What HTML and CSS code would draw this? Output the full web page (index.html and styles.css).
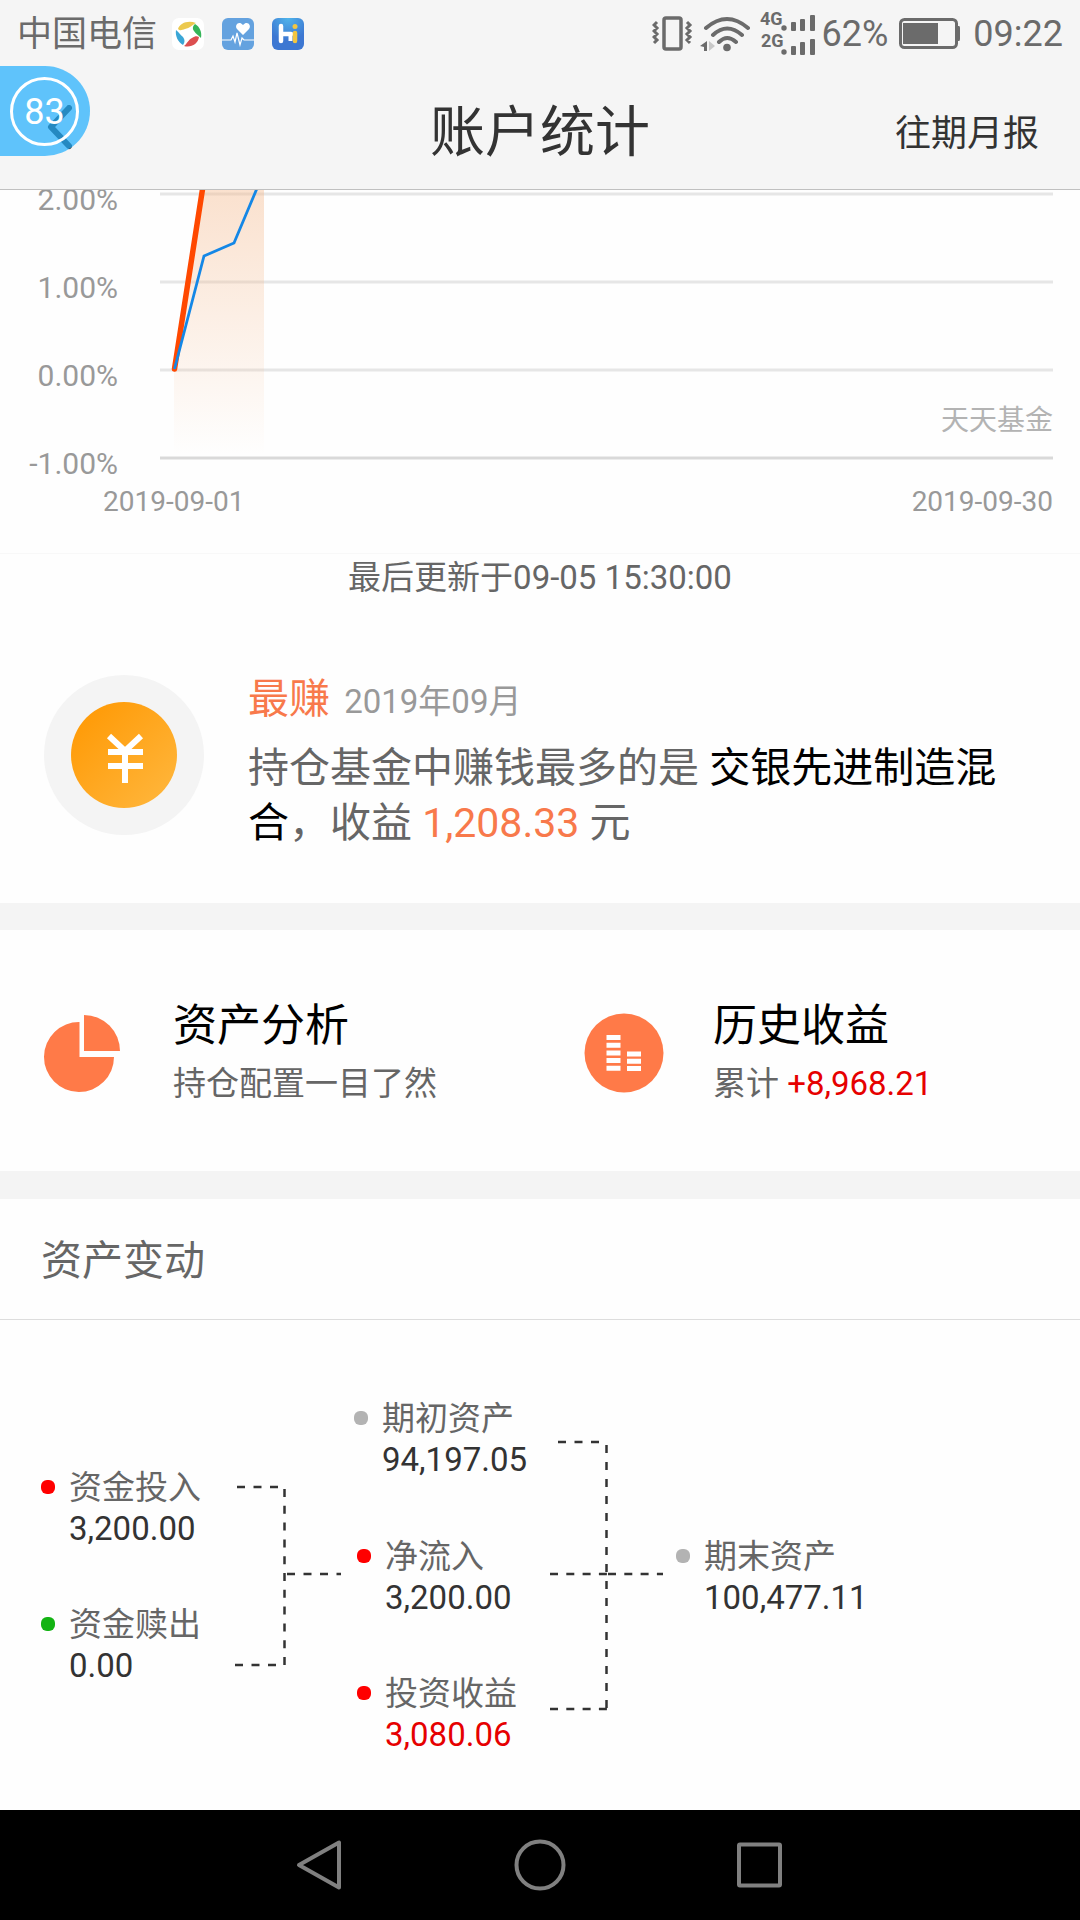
FILE: index.html
```html
<!DOCTYPE html>
<html lang="zh-CN">
<head>
  <meta charset="UTF-8" />
  <meta name="viewport" content="width=device-width, initial-scale=1" />
  <title>账户统计</title>
  <link rel="stylesheet" href="styles.css">
</head>
<body>

<!-- Status bar -->
<div class="statusbar">
  <span class="carrier">中国电信</span>
  <div class="apps">
    <svg width="32" height="32" viewBox="0 0 32 32">
      <rect width="32" height="32" rx="7" fill="#fff" />
      <path d="M6 11C8 5 16 2 24 5C20 7 18 10 13 11C10 12 8 13 6 11Z" fill="#ecc94e" />
      <path d="M23 6C28 9 30 14 29 20C26 17 24 16 22 13C20 10 21 8 23 6Z" fill="#35b558" />
      <path d="M27 19C26 26 19 30 12 28C15 26 16 22 20 20C23 18 25 18 27 19Z" fill="#dc4f50" />
      <path d="M11 27C6 24 3 18 4 12C7 14 8 17 11 19C13 22 13 24 11 27Z" fill="#3aa6d6" />
    </svg>
    <svg width="32" height="32" viewBox="0 0 32 32">
      <rect width="32" height="32" rx="6" fill="#64a2df" />
      <path d="M21 17L15 11C12 7 17 2 21 7C25 2 30 7 27 11Z" fill="#fff" />
      <path d="M0 22H9L11 18L13 24L15 15L18 27L20 20L22 22H32" fill="none" stroke="#fff" stroke-width="1.2" />
    </svg>
    <svg width="32" height="32" viewBox="0 0 32 32">
      <defs>
        <radialGradient id="hiBg" cx="0.5" cy="0" r="0.7">
          <stop offset="0" stop-color="#4fb4ea" />
          <stop offset="1" stop-color="#3d77d2" />
        </radialGradient>
      </defs>
      <rect width="32" height="32" rx="6" fill="url(#hiBg)" />
      <path d="M9 8V23M9 16H19" stroke="#fff" stroke-width="4.5" stroke-linecap="round" />
      <path d="M18.500 15V23" stroke="#fff" stroke-width="4" />
      <path d="M23 15V23" stroke="#f2c640" stroke-width="4.500" stroke-linecap="round" />
      <circle cx="23" cy="8.500" r="2.500" fill="#f2c640" />
    </svg>
  </div>
  <div class="system">
    <svg width="166" height="50" viewBox="0 0 166 50">
      <g fill="none" stroke="#6b6b6b">
        <rect x="12" y="9" width="17" height="31" rx="2" stroke-width="3.500" />
        <path d="M5 13L2 16L5 19L2 22L5 25L2 28L5 31L2 34M35 13L38 16L35 19L38 22L35 25L38 28L35 31L38 34" stroke-width="3" />
        <path d="M54 19Q75 1 96 19M61 26Q75 13 90 26M67 33Q75 25 84 33" stroke-width="4" stroke-linecap="round" />
      </g>
      <g fill="#6b6b6b">
        <circle cx="75" cy="38.500" r="3.800" />
        <path d="M55 32V42H52V38L48 37Z" />
        <path d="M57 32L63 37L57 42Z" fill="#c8c8c8" />
        <text x="108" y="16" class="net">4G</text>
        <text x="109" y="38" class="net">2G</text>
        <circle cx="132" cy="19" r="2.700" />
        <rect x="139" y="13" width="5" height="9" rx="1" />
        <rect x="148" y="10" width="5" height="12" rx="1" />
        <rect x="158" y="6" width="5" height="16" rx="1" />
        <circle cx="132" cy="43" r="2.700" />
        <rect x="139" y="37" width="5" height="9" rx="1" />
        <rect x="148" y="33" width="5" height="13" rx="1" />
        <rect x="158" y="30" width="5" height="16" rx="1" />
      </g>
    </svg>
    <span class="battery-level">62%</span>
    <svg width="62" height="32" viewBox="0 0 62 32">
      <rect x="1.500" y="1.500" width="56" height="28" rx="4" fill="none" stroke="#6b6b6b" stroke-width="3" />
      <rect x="4" y="5" width="35" height="21" fill="#6b6b6b" />
      <path d="M58 8H60Q61 8 61 10V21Q61 23 60 23H58Z" fill="#6b6b6b" />
    </svg>
    <span>09:22</span>
  </div>
</div>

<header class="header">
  <button class="back" aria-label="返回">
    <svg width="26" height="48" viewBox="0 0 26 48">
      <path d="M22 3L4 22L22 41" fill="none" stroke="#333" stroke-width="6" stroke-linecap="round" stroke-linejoin="round" />
    </svg>
  </button>
  <h1>账户统计</h1>
  <a href="#" class="reports">往期月报</a>
  <button class="ball"><span class="ball-ring">83</span></button>
</header>

<main class="content">
  <!-- Return rate chart -->
  <section class="chart">
    <svg viewBox="0 0 1080 363">
      <defs>
        <linearGradient id="area" x1="0" y1="0" x2="0" y2="265" gradientUnits="userSpaceOnUse">
          <stop offset="0" stop-color="#f5b98c" stop-opacity="0.42" />
          <stop offset="1" stop-color="#f5b98c" stop-opacity="0" />
        </linearGradient>
      </defs>
      <g stroke="#e6e6e6" stroke-width="3">
        <path d="M160 4H1053M160 92H1053M160 180H1053" />
        <path d="M160 268H1053" stroke="#d9d9d9" />
      </g>
      <path d="M174 268V180L203 -4H264V268Z" fill="url(#area)" />
      <path d="M174.500 179L203 -4" fill="none" stroke="#ff4800" stroke-width="5.500" stroke-linecap="round" />
      <path d="M174.500 179L204 66L234 53L258 -4" fill="none" stroke="#1487e6" stroke-width="2.800" />
      <g class="axis" text-anchor="end">
        <g class="rates">
          <text x="118" y="20">2.00%</text>
          <text x="118" y="108">1.00%</text>
          <text x="118" y="196">0.00%</text>
          <text x="118" y="284">-1.00%</text>
        </g>
        <text x="1053" y="321">2019-09-30</text>
        <text x="1053" y="240" class="watermark">天天基金</text>
      </g>
      <text x="103" y="321" class="axis">2019-09-01</text>
    </svg>
  </section>

  <p class="updated">最后更新于09-05 15:30:00</p>

  <section class="best">
    <svg class="coin" width="160" height="160" viewBox="0 0 160 160">
      <defs>
        <linearGradient id="gold" x1="0" y1="0" x2="1" y2="1">
          <stop offset="0" stop-color="#ff9700" />
          <stop offset="1" stop-color="#ffb840" />
        </linearGradient>
      </defs>
      <circle cx="80" cy="80" r="80" fill="#f4f4f4" />
      <circle cx="80" cy="80" r="53" fill="url(#gold)" />
      <path d="M65 61L81 76L97 61M81 75V108M64 77H99M64 91H99" fill="none" stroke="#fff" stroke-width="6" />
    </svg>
    <div class="best-text">
      <h2>最赚 <small>2019年09月</small></h2>
      <p>持仓基金中赚钱最多的是 <b>交银先进制造混合</b>，收益 <em>1,208.33</em> 元</p>
    </div>
  </section>

  <nav class="entries">
    <a href="#" class="entry">
      <svg width="82" height="80" viewBox="0 0 82 80">
        <path d="M36.500 9A35 35 0 1 0 71 44H36.500Z" fill="#ff7a48" />
        <path d="M41 2A36 36 0 0 1 77 38H41Z" fill="#ff7a48" />
      </svg>
      <span class="entry-text">
        <strong>资产分析</strong>
        <span>持仓配置一目了然</span>
      </span>
    </a>
    <a href="#" class="entry">
      <svg width="82" height="80" viewBox="0 0 82 80">
        <circle cx="41" cy="40" r="39.500" fill="#ff7a48" />
        <path d="M30.500 22V59" stroke="#fff" stroke-width="14" stroke-dasharray="5 2.700" />
        <path d="M51 38.500V59" stroke="#fff" stroke-width="14" stroke-dasharray="5 2.200" />
      </svg>
      <span class="entry-text">
        <strong>历史收益</strong>
        <span>累计 <i>+8,968.21</i></span>
      </span>
    </a>
  </nav>

  <section class="changes">
    <h2>资产变动</h2>
    <div class="flow">
      <svg class="links" width="700" height="490" viewBox="0 0 700 490">
        <g fill="none" stroke="#333" stroke-width="2.500">
          <path d="M237 167H284" stroke-dasharray="8 8.500" />
          <path d="M284.500 169V345" stroke-dasharray="8 8.800" />
          <path d="M235 345H284M287 254H341" stroke-dasharray="8 8.500" />
          <path d="M558 122H602" stroke-dasharray="8 8.500" />
          <path d="M606.500 125V389" stroke-dasharray="8 9" />
          <path d="M550 389H607M550 254H607M608 254H663" stroke-dasharray="8 8.300" />
        </g>
      </svg>
      <dl class="node node-in"><dt>资金投入</dt><dd>3,200.00</dd></dl>
      <dl class="node node-out"><dt>资金赎出</dt><dd>0.00</dd></dl>
      <dl class="node node-start"><dt>期初资产</dt><dd>94,197.05</dd></dl>
      <dl class="node node-net"><dt>净流入</dt><dd>3,200.00</dd></dl>
      <dl class="node node-profit"><dt>投资收益</dt><dd>3,080.06</dd></dl>
      <dl class="node node-end"><dt>期末资产</dt><dd>100,477.11</dd></dl>
    </div>
  </section>
</main>

<!-- System navigation -->
<nav class="navbar">
  <button aria-label="返回">
    <svg width="52" height="52" viewBox="0 0 52 52"><path d="M45 3.500V48.500L5 26Z" /></svg>
  </button>
  <button aria-label="主页">
    <svg width="52" height="52" viewBox="0 0 52 52"><circle cx="26" cy="26" r="23.500" /></svg>
  </button>
  <button aria-label="最近任务">
    <svg width="52" height="52" viewBox="0 0 52 52"><rect x="5" y="5.500" width="41" height="41" rx="1" /></svg>
  </button>
</nav>

</body>
</html>
```
FILE: styles.css
```css
* {
  box-sizing: border-box;
}
body {
  margin: 0;
  min-height: 100vh;
  display: flex;
  flex-direction: column;
  font-family: Roboto, "Noto Sans CJK SC", sans-serif;
  font-size: 33px;
  line-height: 41px;
  color: #666;
  background: #fefefe;
}
h1, h2, p, dl, dd {
  margin: 0;
  font-weight: 400;
}
a {
  color: inherit;
  text-decoration: none;
}
button {
  padding: 0;
  border: none;
  background: none;
  font: inherit;
  cursor: pointer;
}
svg {
  display: block;
  flex: none;
}

/* Status bar */
.statusbar {
  display: flex;
  align-items: center;
  height: 66px;
  padding: 2px 17px 0;
  background: #f5f5f5;
  color: #6b6b6b;
  font-size: 35px;
}
.apps {
  display: flex;
  gap: 18px;
  margin-left: 15px;
}
.system {
  display: flex;
  align-items: center;
  margin-left: auto;
  font-size: 36px;
}
.battery-level {
  margin: 0 11px 0 4px;
}
.system svg + span:last-child {
  margin-left: 12px;
}
.net {
  font-size: 18px;
  font-weight: 700;
}

/* Header */
.header {
  position: relative;
  display: grid;
  grid-template-columns: 1fr auto 1fr;
  align-items: center;
  height: 124px;
  padding: 8px 41px 0;
  border-bottom: 1px solid #c0c0c0;
  background: #f5f5f5;
  color: #333;
}
.header h1 {
  font-size: 55px;
  line-height: 66px;
}
.back {
  justify-self: start;
  margin: 0 0 6px 6px;
}
.reports {
  justify-self: end;
  padding-top: 5px;
  font-size: 36px;
}
.ball {
  position: absolute;
  top: 0;
  left: 0;
  width: 90px;
  height: 90px;
  padding-left: 10px;
  border-radius: 0 45px 45px 0;
  background: rgba(31, 174, 254, 0.7);
  color: #fff;
  font-size: 36px;
}
.ball-ring {
  display: block;
  width: 69px;
  height: 69px;
  border: 3px solid #fff;
  border-radius: 50%;
  line-height: 65px;
  text-align: center;
}

/* Chart */
.content {
  flex: 1;
}
.chart {
  border-bottom: 1px solid #f8f8f8;
}
.chart svg {
  width: 100%;
}
.axis {
  fill: #999;
  font-size: 28px;
}
.rates {
  font-size: 30px;
}
.watermark {
  fill: #b3b3b3;
}
.updated {
  padding: 3px 0 74px;
  text-align: center;
}

/* Best fund */
.best {
  display: flex;
  align-items: flex-start;
  gap: 44px;
  padding: 0 44px 52px;
  font-size: 41px;
  line-height: 55px;
}
.coin {
  margin-top: 3px;
}
.best h2 {
  margin-bottom: 12px;
  color: #f8794b;
  font-size: 41px;
}
.best small {
  margin-left: 4px;
  color: #999;
  font-size: 33px;
}
.best b {
  color: #000;
  font-weight: 400;
}
.best em {
  color: #f8794b;
  font-style: normal;
}

/* Entries */
.entries {
  display: grid;
  grid-template-columns: 1fr 1fr;
  border: solid #f4f4f4;
  border-width: 27px 0 28px;
}
.entry {
  display: flex;
  align-items: center;
  gap: 48px;
  padding: 67px 0 67px 43px;
}
.entry svg {
  margin-top: 5px;
}
.entry-text {
  display: flex;
  flex-direction: column;
  gap: 7px;
}
.entry strong {
  color: #000;
  font-size: 44px;
  font-weight: 400;
  line-height: 59px;
}
.entry i {
  color: #e60000;
  font-style: normal;
}

/* Asset changes */
.changes h2 {
  padding: 34px 41px 30px;
  border-bottom: 1px solid #ddd;
  font-size: 41px;
  line-height: 56px;
}
.flow {
  position: relative;
  height: 490px;
}
.node {
  position: absolute;
  padding-left: 28px;
}
.node::before {
  content: "";
  position: absolute;
  left: 0;
  top: 13px;
  width: 14px;
  height: 14px;
  border-radius: 6px;
  background: #f00;
}
.node dd {
  color: #333;
}
.node-in {
  left: 41px;
  top: 147px;
}
.node-out {
  left: 41px;
  top: 284px;
}
.node-start {
  left: 354px;
  top: 78px;
}
.node-net {
  left: 357px;
  top: 216px;
}
.node-profit {
  left: 357px;
  top: 353px;
}
.node-end {
  left: 676px;
  top: 216px;
}
.node-out::before {
  background: #13b313;
}
.node-start::before, .node-end::before {
  background: #b3b3b3;
}
.node-profit dd {
  color: #e60000;
}

/* System navigation */
.navbar {
  display: flex;
  justify-content: center;
  align-items: center;
  gap: 168px;
  height: 110px;
  background: #000;
}
.navbar svg {
  fill: none;
  stroke: #808080;
  stroke-width: 4;
  stroke-linejoin: round;
}
```
